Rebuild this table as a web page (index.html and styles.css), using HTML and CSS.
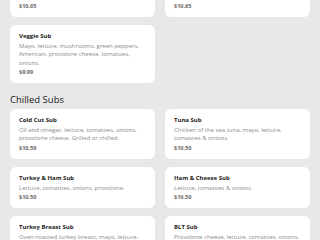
FILE: index.html
```html
<!DOCTYPE html>
<html>
<head>
<meta charset="utf-8">
<link rel="stylesheet" href="styles.css">
</head>
<body>
<main class="page">
  <section class="section">
    <h2 class="section-title">Hot Subs</h2>
    <div class="grid">
      <div class="card">
        <div class="card-title">Steak &amp; Cheese Sub</div>
        <div class="card-desc">Grilled steak, peppers, onions, mushrooms, provolone cheese.</div>
        <div class="card-price">$10.65</div>
      </div>
      <div class="card">
        <div class="card-title">Chicken Parm Sub</div>
        <div class="card-desc">Breaded chicken, marinara sauce, provolone cheese.</div>
        <div class="card-price">$10.65</div>
      </div>
      <div class="card">
        <div class="card-title">Veggie Sub</div>
        <div class="card-desc">Mayo, lettuce, mushrooms, green peppers, American, provolone cheese, tomatoes, onions.</div>
        <div class="card-price">$9.99</div>
      </div>
    </div>
  </section>
  <section class="section">
    <h2 class="section-title">Chilled Subs</h2>
    <div class="grid">
      <div class="card">
        <div class="card-title">Cold Cut Sub</div>
        <div class="card-desc">Oil and vinegar, lettuce, tomatoes, onions, provolone cheese. Grilled or chilled.</div>
        <div class="card-price">$10.50</div>
      </div>
      <div class="card">
        <div class="card-title">Tuna Sub</div>
        <div class="card-desc">Chicken of the sea tuna, mayo, lettuce, tomatoes &amp; onions.</div>
        <div class="card-price">$10.50</div>
      </div>
      <div class="card">
        <div class="card-title">Turkey &amp; Ham Sub</div>
        <div class="card-desc">Lettuce, tomatoes, onions, provolone.</div>
        <div class="card-price">$10.50</div>
      </div>
      <div class="card">
        <div class="card-title">Ham &amp; Cheese Sub</div>
        <div class="card-desc">Lettuce, tomatoes &amp; onions.</div>
        <div class="card-price">$10.50</div>
      </div>
      <div class="card">
        <div class="card-title">Turkey Breast Sub</div>
        <div class="card-desc">Oven-roasted turkey breast, mayo, lettuce, tomatoes &amp; onions.</div>
        <div class="card-price">$10.50</div>
      </div>
      <div class="card">
        <div class="card-title">BLT Sub</div>
        <div class="card-desc">Provolone cheese, lettuce, tomatoes, onions, bacon &amp; mayo.</div>
        <div class="card-price">$10.50</div>
      </div>
    </div>
  </section>
</main>
</body>
</html>
```

FILE: styles.css
```css
html, body {
  margin: 0;
  padding: 0;
  background: #e8e8e8;
}
body {
  font-family: "Open Sans", "Liberation Sans", sans-serif;
  color: #222;
  overflow: hidden;
}
.page {
  display: flex;
  flex-direction: column;
  padding: 0 10px;
  margin-top: -59px;
}
.section {
  display: flex;
  flex-direction: column;
}
.section-title {
  margin: 10px 0 2px;
  font-size: 9.5px;
  line-height: 14px;
  font-weight: 400;
  color: #222;
}
.grid {
  display: grid;
  grid-template-columns: 1fr 1fr;
  column-gap: 10px;
  row-gap: 8px;
  align-items: start;
}
.card {
  background: #fff;
  border-radius: 6px;
  padding: 7px 9px;
}
.card-title {
  font-size: 6px;
  line-height: 8px;
  font-weight: 700;
  color: #1a1a1a;
  margin-bottom: 2px;
}
.card-desc {
  font-size: 6px;
  line-height: 8.4px;
  color: #8a8a8a;
}
.card-price {
  font-size: 5.5px;
  line-height: 8px;
  font-weight: 700;
  color: #666;
  margin-top: 1px;
}
```
